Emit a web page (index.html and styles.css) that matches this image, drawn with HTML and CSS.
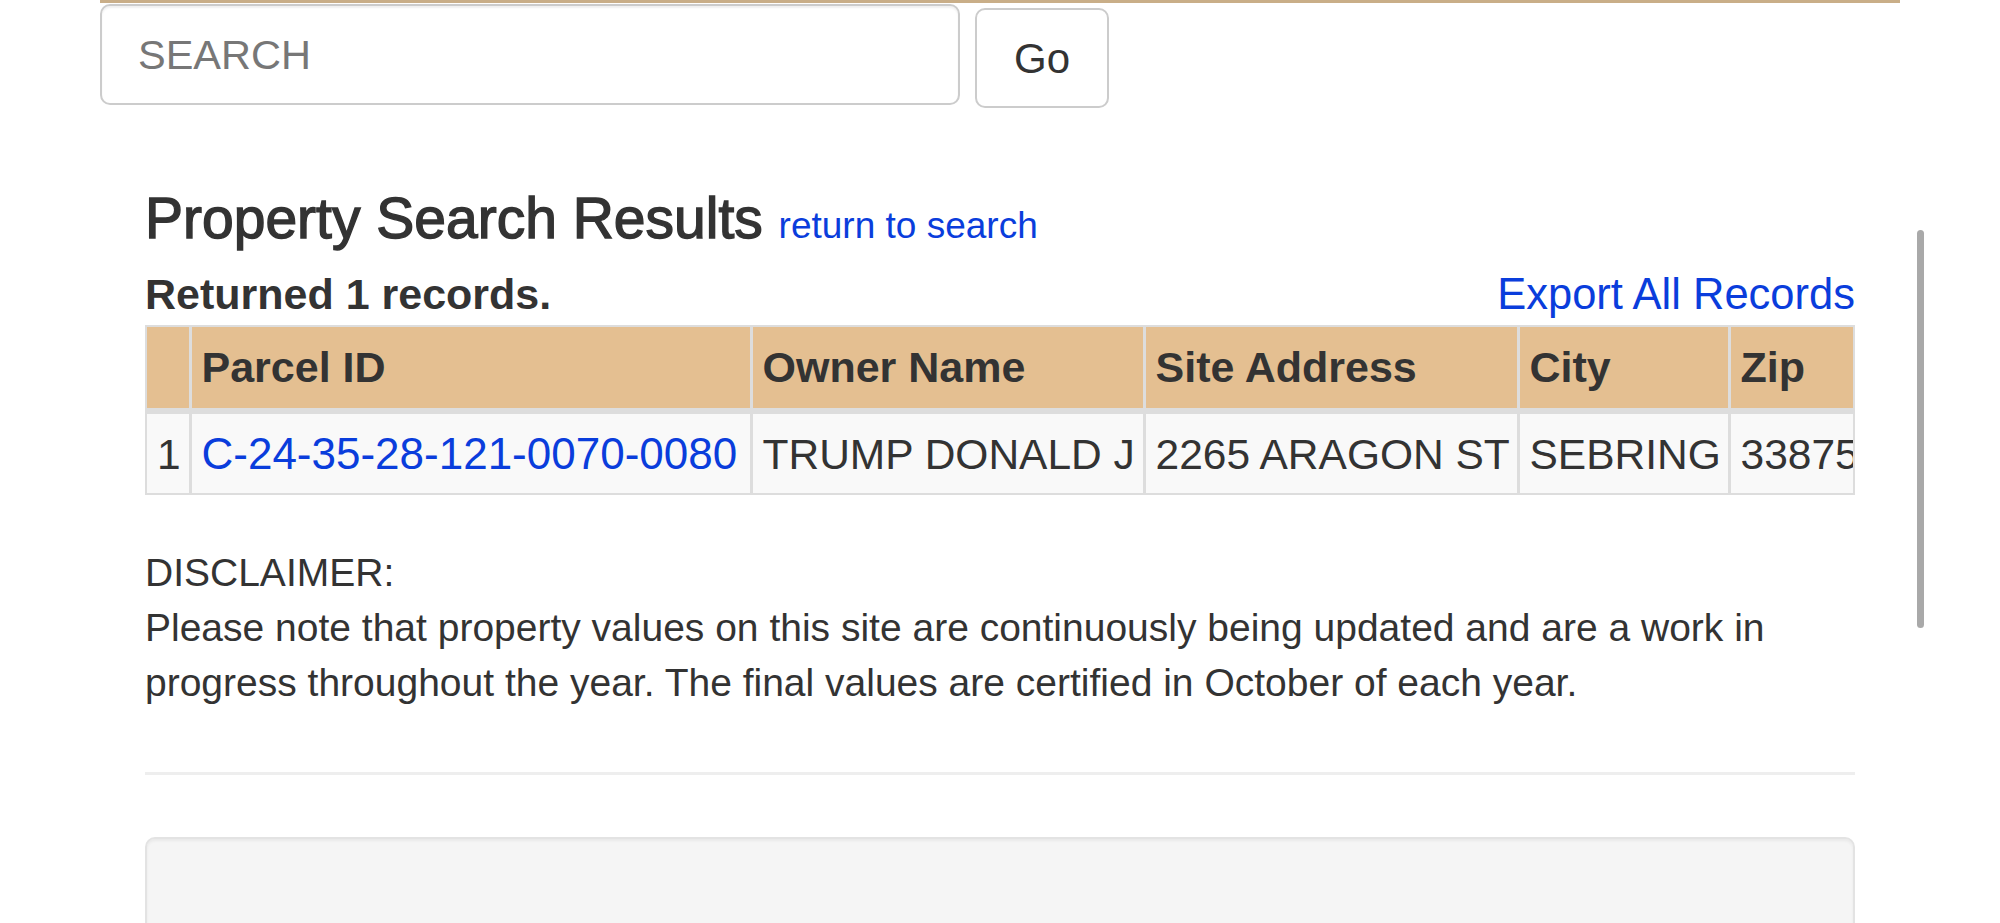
FILE: index.html
```html
<!DOCTYPE html>
<html lang="en">
<head>
<meta charset="utf-8">
<title>Property Search Results</title>
<link rel="stylesheet" href="styles.css">
</head>
<body>
<div class="container">
  <form class="search-row">
    <input class="search-input" type="text" placeholder="SEARCH">
    <button class="go-btn" type="button">Go</button>
  </form>

  <div class="content">
    <h2 class="title">Property Search Results <small><a href="#">return to search</a></small></h2>

    <div class="records-row">
      <span class="records-count">Returned 1 records.</span>
      <a class="export-link" href="#">Export All Records</a>
    </div>

    <div class="table-wrap">
      <table class="results">
        <colgroup>
          <col class="c-idx">
          <col class="c-parcel">
          <col class="c-owner">
          <col class="c-addr">
          <col class="c-city">
          <col class="c-zip">
        </colgroup>
        <thead>
          <tr>
            <th></th>
            <th>Parcel ID</th>
            <th>Owner Name</th>
            <th>Site Address</th>
            <th>City</th>
            <th>Zip</th>
          </tr>
        </thead>
        <tbody>
          <tr>
            <td>1</td>
            <td><a class="parcel-link" href="#">C-24-35-28-121-0070-0080</a></td>
            <td>TRUMP DONALD J</td>
            <td>2265 ARAGON ST</td>
            <td>SEBRING</td>
            <td>33875</td>
          </tr>
        </tbody>
      </table>
    </div>

    <p class="disclaimer">DISCLAIMER:<br>Please note that property values on this site are continuously being updated and are a work in progress throughout the year. The final values are certified in October of each year.</p>

    <hr class="divider">

    <div class="well"></div>
  </div>
</div>
<div class="scrollbar"></div>
</body>
</html>
```

FILE: styles.css
```css
html, body {
  margin: 0;
  padding: 0;
  background: #ffffff;
  overflow: hidden;
}

body {
  font-family: "Liberation Sans", Arial, sans-serif;
  color: #333333;
  font-size: 40px;
  line-height: 55px;
}

a {
  color: #0a3ddc;
  text-decoration: none;
}

.container {
  width: 1800px;
  margin: 0 auto;
  border-top: 3px solid #c9ae88;
}

.search-row {
  display: flex;
  align-items: flex-start;
  gap: 15px;
  margin: 1px 0 0 0;
}

.search-input {
  box-sizing: border-box;
  width: 860px;
  height: 101px;
  border: 2px solid #cccccc;
  border-radius: 10px;
  padding: 0 0 0 36px;
  font-family: "Liberation Sans", Arial, sans-serif;
  font-size: 41.5px;
  color: #333333;
  background: #ffffff;
  box-shadow: inset 0 2px 2px rgba(0,0,0,0.06);
  outline: none;
}

.search-input::placeholder {
  color: #777777;
}

.go-btn {
  box-sizing: border-box;
  width: 134px;
  height: 100px;
  margin-top: 4px;
  border: 2px solid #cccccc;
  border-radius: 10px;
  background: #ffffff;
  font-family: "Liberation Sans", Arial, sans-serif;
  font-size: 42px;
  color: #333333;
  padding: 2px 0 0 0;
}

.content {
  padding: 0 45px;
}

.title {
  margin: 79px 0 10px 0;
  font-size: 57px;
  line-height: 63px;
  font-weight: 400;
  -webkit-text-stroke: 1.4px #333333;
  color: #333333;
}

.title small {
  font-size: 37px;
  -webkit-text-stroke: 0;
}

.records-row {
  display: flex;
  justify-content: space-between;
  align-items: baseline;
  font-size: 43px;
  line-height: 55px;
}

.export-link {
  font-size: 43.5px;
}

.records-count {
  font-weight: 700;
}

.table-wrap {
  margin-top: 3px;
  border: 2px solid #dddddd;
  overflow: hidden;
}

.results {
  border-collapse: collapse;
  table-layout: fixed;
  width: 1868px;
  white-space: nowrap;
  font-size: 43px;
  line-height: 61px;
}

.c-idx { width: 43px; }
.c-parcel { width: 561px; }
.c-owner { width: 393px; }
.c-addr { width: 374px; }
.c-city { width: 211px; }
.c-zip { width: 286px; }

.results th,
.results td {
  border: 3px solid #dddddd;
  padding: 10px 8px 10px 10px;
  text-align: left;
}

.results tr > :first-child {
  border-left: 0;
}

.results thead th {
  border-top: 0;
  background: #e4bf91;
  font-weight: 700;
  border-bottom-width: 6px;
}

.results tbody td {
  background: #f9f9f9;
  border-bottom: 0;
  font-size: 42.5px;
  padding-top: 9px;
  padding-bottom: 8px;
}

.results .parcel-link {
  font-size: 44px;
}

.disclaimer {
  margin: 50px 0 0 0;
  font-size: 39px;
  line-height: 55px;
}

.divider {
  margin: 62px 0 0 0;
  border: 0;
  border-top: 3px solid #eeeeee;
}

.well {
  margin-top: 62px;
  height: 200px;
  background: #f5f5f5;
  border: 2px solid #e3e3e3;
  border-radius: 10px;
  box-shadow: inset 0 2px 3px rgba(0,0,0,0.05);
}

.scrollbar {
  position: absolute;
  left: 1917px;
  top: 230px;
  width: 7px;
  height: 398px;
  border-radius: 4px;
  background: #a9a9a9;
}
```
